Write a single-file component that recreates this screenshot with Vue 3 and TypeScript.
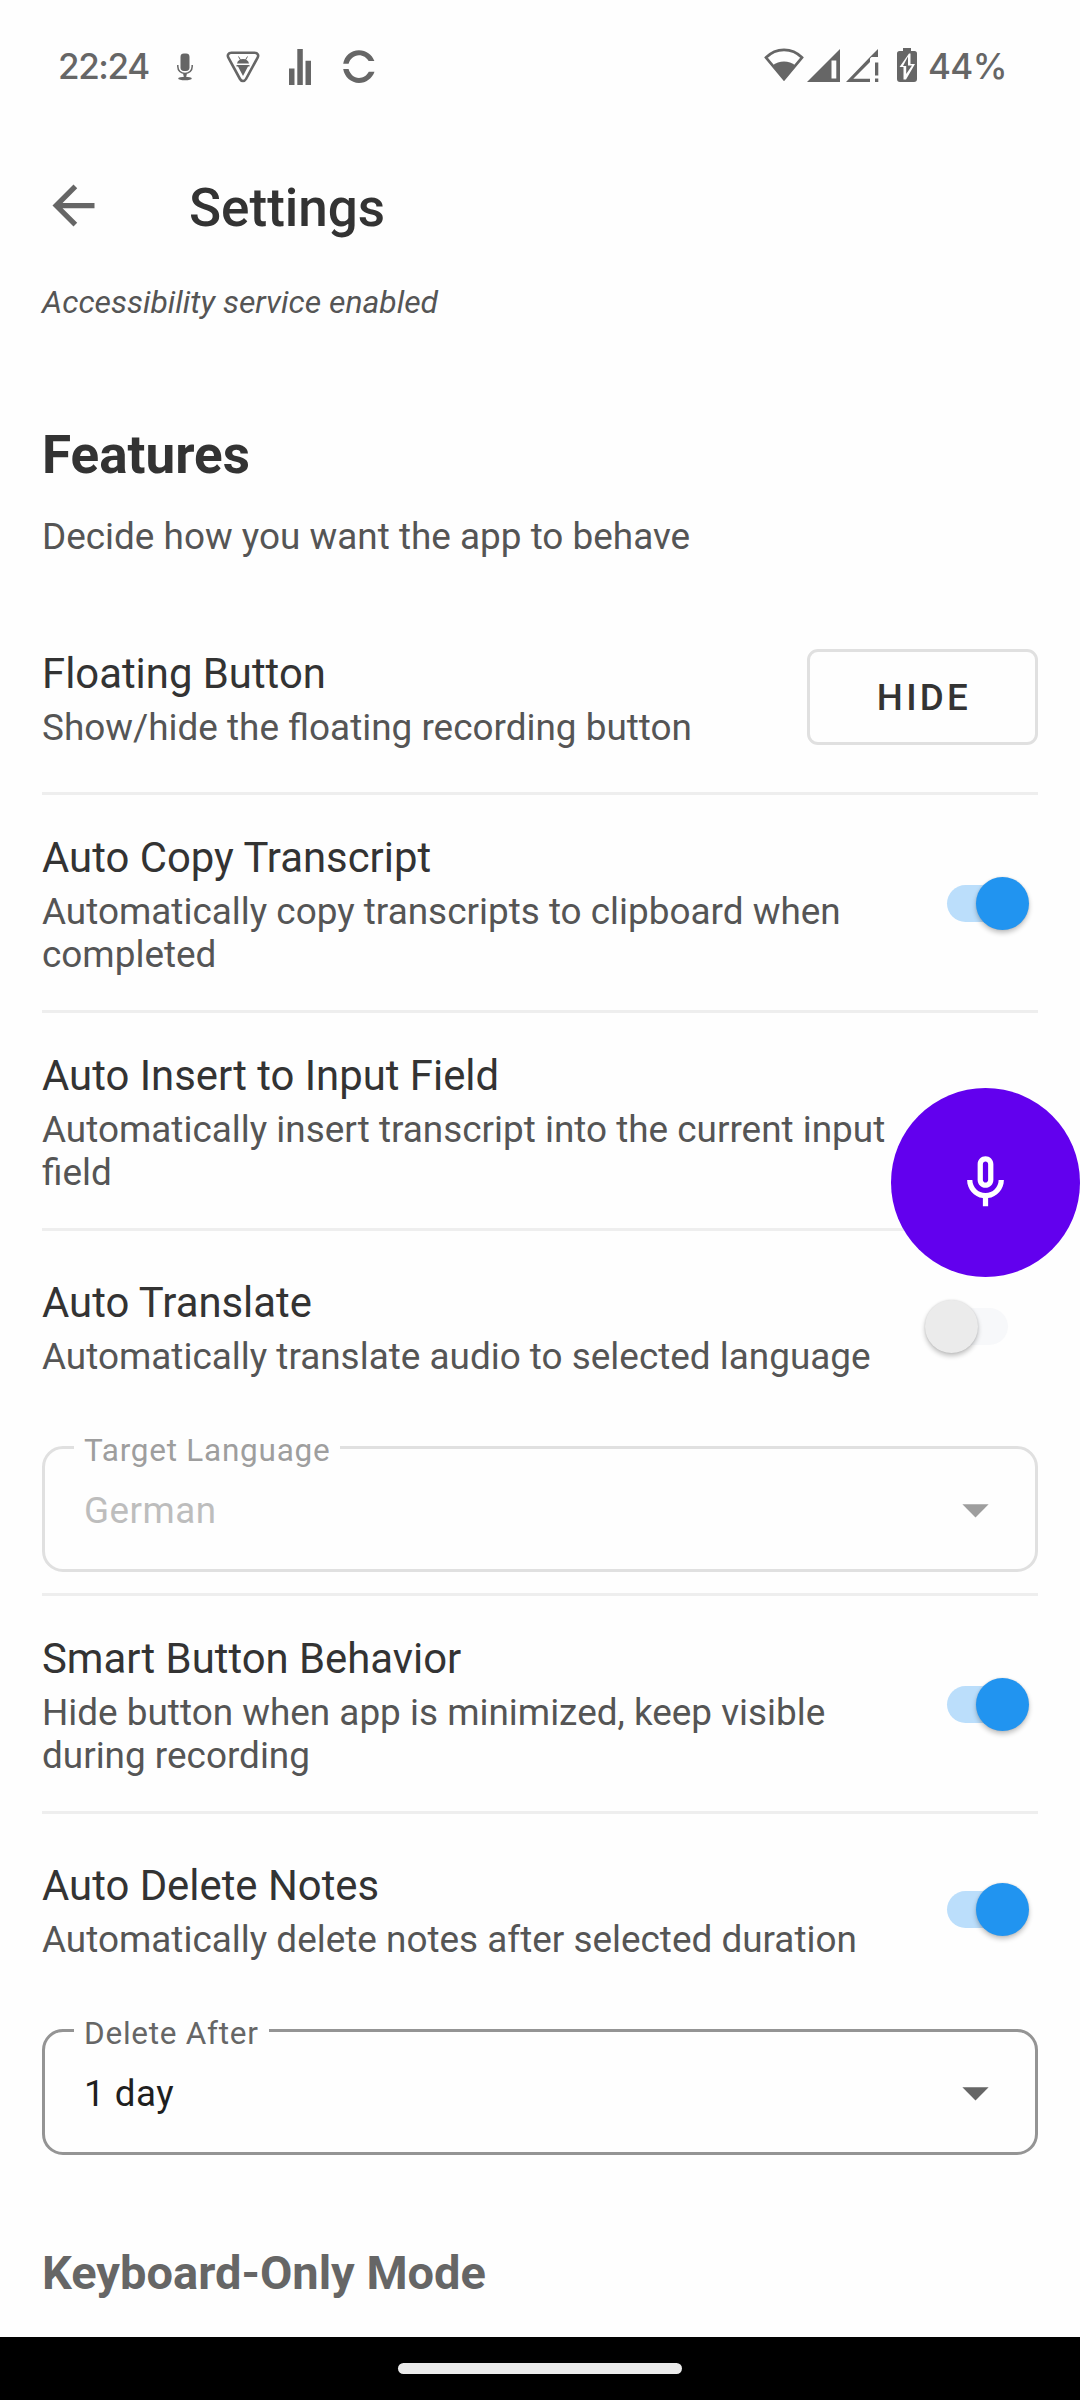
<script setup lang="ts">
interface Setting {
  title: string
  lines: string[]
  on?: boolean
  kind: 'button' | 'toggle' | 'select'
  label?: string
  value?: string
}

const settings: Setting[] = [
  { title: 'Floating Button', lines: ['Show/hide the floating recording button'], kind: 'button' },
  { title: 'Auto Copy Transcript', lines: ['Automatically copy transcripts to clipboard when', 'completed'], kind: 'toggle', on: true },
  { title: 'Auto Insert to Input Field', lines: ['Automatically insert transcript into the current input', 'field'], kind: 'toggle', on: true },
  { title: 'Auto Translate', lines: ['Automatically translate audio to selected language'], kind: 'select', on: false, label: 'Target Language', value: 'German' },
  { title: 'Smart Button Behavior', lines: ['Hide button when app is minimized, keep visible', 'during recording'], kind: 'toggle', on: true },
  { title: 'Auto Delete Notes', lines: ['Automatically delete notes after selected duration'], kind: 'select', on: true, label: 'Delete After', value: '1 day' },
]
</script>

<template>
  <div class="screen">
    <header class="status">
      <div class="status-left">
        <span class="clock">22:24</span>
        <svg class="i-mic" width="16" height="28" viewBox="0 0 16 28">
          <rect x="3.5" y="0.5" width="9" height="17.5" rx="3.4" />
          <path d="M.8 12v1.500c0 4 3 6.900 7.200 6.900s7.200-2.900 7.200-6.900V12" fill="none" stroke="currentColor" stroke-width="1.500" />
          <path d="M6 20.500h4l-1 4H7z" />
          <ellipse cx="8" cy="25.500" rx="6.800" ry="1.800" />
        </svg>
        <svg class="i-shield" width="34" height="32" viewBox="0 0 34 32">
          <path d="M5.500 1.800h23c3.300 0 4.500 2.400 3 5L20 28c-1.500 2.700-4.500 2.700-6 0L2.500 6.800c-1.500-2.600-.3-5 3-5z" fill="none" stroke="currentColor" stroke-width="2.600" />
          <path d="M11 12.500c.5-3 3-4.500 6-4.500s5.500 1.500 6 4.500z" />
          <path d="M12.500 5.500l2 3.500M21.500 5.500l-2 3.500" stroke="currentColor" stroke-width="1" />
          <path d="M10.500 14h13v1.500h-1.500l-5 9.500-5-9.500h-1.500z" />
        </svg>
        <svg class="i-bars" width="22" height="36" viewBox="0 0 22 36">
          <path d="M0 19.500h5.500V36H0zM8.300 0h5.500v36H8.300zM16.500 11.700H22V36h-5.500z" />
        </svg>
        <svg class="i-ring" width="32" height="33" viewBox="0 0 32 33">
          <path d="M.2 13.800C1.500 6 8 .3 16 .3c7 0 13 4.300 15.400 10.700h-5.800C23.600 7.500 20 5.200 16 5.200c-5 0-9 3.500-10.400 8.600zM.2 19h5.400C7 24.200 11 27.900 16 27.900c4.200 0 7.800-2.400 9.800-6.200h5.700C29.200 28.400 23 32.900 16 32.900 8 32.900 1.500 27 .2 19z" />
        </svg>
      </div>
      <div class="status-right">
        <svg class="i-wifi" width="40" height="34" viewBox="0 0 40 34">
          <path d="M2 9.500C12-.8 28-.8 38 9.500L20 31.200z" fill="none" stroke="currentColor" stroke-width="2.700" />
          <path d="M8.500 17.500c6.500-5.500 16.500-5.500 23 0L20 32z" />
        </svg>
        <svg class="i-cell" width="33" height="33" viewBox="0 0 33 33">
          <path fill-rule="evenodd" d="M33 0v33H0zM24.500 11.500v18h4.800v-18z" />
        </svg>
        <svg class="i-cell2" width="33" height="33" viewBox="0 0 33 33">
          <path fill-rule="evenodd" d="M32 0v8h-6.500l-1.500 1.500v3.600L7.300 29.800H24V33H0L24 8z" />
          <path d="M29 13.500h3.300v13H29zM29 29.500h3.300V33H29z" />
        </svg>
        <svg class="i-batt" width="20" height="34" viewBox="0 0 20 34">
          <path fill-rule="evenodd" d="M6 0h8v3h3.500A2.500 2.500 0 0 1 20 5.500V31a3 3 0 0 1-3 3H3a3 3 0 0 1-3-3V5.500A2.500 2.500 0 0 1 2.500 3H6zM12 5.500L2.500 19h4v12.500h2.500L18 16h-4.500V5.500z" />
          <path d="M11 8.500v9h4L9.200 26v-8H6z" />
        </svg>
        <span class="percent">44%</span>
      </div>
    </header>

    <nav class="appbar">
      <svg class="back" width="63" height="63" viewBox="0 0 24 24">
        <path d="M20 11H7.830l5.590-5.590L12 4l-8 8 8 8 1.410-1.410L7.830 13H20v-2z" />
      </svg>
      <h1>Settings</h1>
    </nav>

    <main>
      <p class="service">Accessibility service enabled</p>
      <h2>Features</h2>
      <p class="lead">Decide how you want the app to behave</p>

      <section v-for="s in settings" :key="s.title" class="item" :class="s.kind">
        <div class="row">
          <div class="copy">
            <div class="title">{{ s.title }}</div>
            <div v-for="l in s.lines" :key="l" class="desc">{{ l }}</div>
          </div>
          <button v-if="s.kind === 'button'" class="hide">HIDE</button>
          <div v-else class="switch" :class="{ on: s.on }"><i class="thumb"></i></div>
        </div>
        <div v-if="s.kind === 'select'" class="field" :class="{ enabled: s.on }">
          <span class="label">{{ s.label }}</span>
          <span class="value">{{ s.value }}</span>
          <svg width="63" height="63" viewBox="0 0 24 24"><path d="M7 10l5 5 5-5z" /></svg>
        </div>
      </section>

      <h3>Keyboard-Only Mode</h3>
    </main>

    <footer class="navbar"><div class="pill"></div></footer>

    <div class="fab">
      <svg width="63" height="63" viewBox="0 0 24 24">
        <path d="M12 14c1.660 0 3-1.340 3-3V5c0-1.660-1.340-3-3-3S9 3.340 9 5v6c0 1.660 1.340 3 3 3zm-1-9c0-.55.45-1 1-1s1 .45 1 1v6c0 .55-.45 1-1 1s-1-.45-1-1V5zm6 6c0 2.760-2.240 5-5 5s-5-2.240-5-5H5c0 3.530 2.610 6.430 6 6.920V21h2v-3.080c3.390-.49 6-3.390 6-6.920h-2z" />
      </svg>
    </div>
  </div>
</template>

<style>
body { margin: 0; background: #fefefe; }
</style>

<style scoped>
* { box-sizing: border-box; }
.screen {
  position: relative;
  width: 1080px;
  height: 2400px;
  overflow: hidden;
  background: #fefefe;
  font-family: Roboto, sans-serif;
  color: #333;
  display: flex;
  flex-direction: column;
  white-space: nowrap;
}
svg { fill: currentColor; display: block; flex: none; }
h1, h2, h3, p { margin: 0; }

.status {
  height: 132px;
  display: flex;
  justify-content: space-between;
  color: #666;
  font-family: Inter, Roboto, sans-serif;
  font-size: 35px;
  font-weight: 500;
  line-height: 42px;
}
.status-left, .status-right { display: flex; align-items: flex-start; }
.status-left { padding-left: 58px; }
.clock { width: 119px; margin-top: 45px; letter-spacing: -1.4px; }
.i-mic { margin-top: 53px; }
.i-shield { margin: 51px 0 0 33px; }
.i-bars { margin: 49px 0 0 29px; }
.i-ring { margin: 50px 0 0 32px; }
.i-wifi { margin-top: 48px; }
.i-cell { margin: 49px 0 0 3px; }
.i-cell2 { margin: 49px 0 0 6px; }
.i-batt { margin: 48px 0 0 18px; }
.percent { width: 163px; padding-left: 11px; margin-top: 45px; letter-spacing: -.6px; }

.appbar { height: 147px; padding: 42px 0 0 42px; display: flex; }
.back { color: #666; }
h1 { margin-left: 84px; margin-top: 3px; font-size: 53px; line-height: 62px; font-weight: 500; }

main { flex: 1; min-height: 0; overflow: hidden; padding: 5px 42px 0; }
.service { font-size: 31.9px; line-height: 37px; font-style: italic; color: #555; }
h2 { margin-top: 103px; font-size: 53px; line-height: 62px; font-weight: 700; }
.lead { margin-top: 29px; font-size: 36.9px; line-height: 43px; color: #555; }

.item { border-bottom: 3px solid #eee; }
.item:last-of-type { border-bottom: 0; }
.row { display: flex; justify-content: space-between; height: 215px; padding-top: 38px; }
.button .row { height: 234px; padding-top: 91px; }
.select .row { padding-top: 47px; }
.title { font-size: 41.85px; line-height: 49px; margin-bottom: 8px; }
.desc { font-size: 36.9px; line-height: 43px; color: #555; }
.hide {
  width: 231px;
  height: 96px;
  padding: 1px 0 0 3px;
  border: 3px solid #e0e0e0;
  border-radius: 11px;
  background: none;
  font: 500 36.75px/43px Roboto, sans-serif;
  letter-spacing: 3.280px;
  color: #333;
}
.switch {
  display: flex;
  align-items: center;
  width: 61px;
  height: 37px;
  margin: 52px 30px 0 0;
  border-radius: 19px;
  background: #f7f8fa;
}
.select .switch { margin-top: 30px; }
.thumb {
  flex: none;
  width: 53px;
  height: 53px;
  margin-left: -22px;
  border-radius: 50%;
  background: #ebebeb;
  box-shadow: 0 3px 5px rgba(0, 0, 0, .24), 0 0 2px rgba(0, 0, 0, .12);
}
.on { background: #bbdefb; }
.on .thumb { margin-left: 29px; background: #2194f0; }

.field {
  position: relative;
  display: flex;
  justify-content: space-between;
  height: 126px;
  margin-bottom: 21px;
  padding: 29px 28px 0 39px;
  border: 3px solid #e0e0e0;
  border-radius: 21px;
  color: #9e9e9e;
}
.label {
  position: absolute;
  left: 29px;
  top: -17px;
  padding: 0 10px;
  background: #fefefe;
  font-size: 31.5px;
  line-height: 37px;
  letter-spacing: .75px;
}
.value { margin-top: 11px; font-size: 36.75px; line-height: 43px; letter-spacing: .5px; color: #bdbdbd; }
.enabled { border-color: #949494; color: #666; }
.enabled .value { color: #1f1f1f; }
.item:last-of-type .field { margin-bottom: 0; }

h3 { margin-top: 90px; font-size: 47px; line-height: 56px; font-weight: 700; color: #666; }

.navbar { height: 63px; background: #000; display: flex; justify-content: center; padding-top: 26px; }
.pill { width: 284px; height: 11px; border-radius: 6px; background: #ebebeb; }

.fab {
  position: absolute;
  right: 0;
  top: 1088px;
  width: 189px;
  height: 189px;
  border-radius: 50%;
  background: #6200ee;
  color: #fff;
  display: flex;
  align-items: center;
  justify-content: center;
}
</style>
